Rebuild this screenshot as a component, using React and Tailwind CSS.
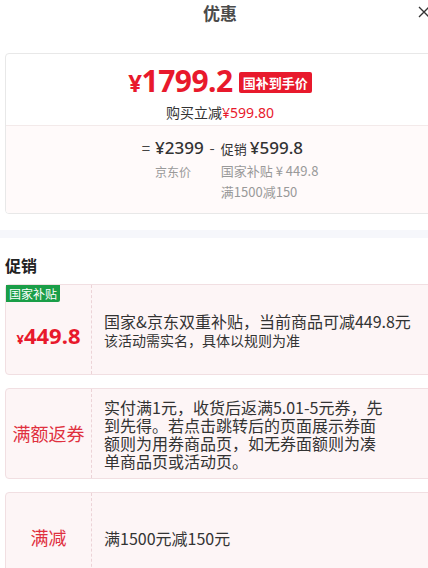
import React from 'react';

const cjk = '"Noto Sans CJK SC", "Noto Sans", sans-serif';
const num = '"Noto Sans", "Noto Sans CJK SC", sans-serif';

function PromoCard({ left, children }) {
    return (
        <div className="mx-[5px] flex h-[91px] rounded-[4px] border border-[#f1dfe2] bg-[#fdf5f6]">
            <div className="relative flex w-[86px] shrink-0 items-center justify-center border-r border-dashed border-[#ecd3d7]">
                {left}
            </div>
            <div className="flex flex-1 flex-col justify-center pl-[12px] text-[#333]">
                {children}
            </div>
        </div>
    );
}

export default function App() {
    return (
        <div className="w-[428px] h-[568px] overflow-hidden bg-white" style={{ fontFamily: cjk }}>
            <div className="w-[440px]">
                {/* header */}
                <div className="relative flex h-[24px] items-center justify-center">
                    <span className="text-[17px] font-bold text-[#4a4a4a] leading-none">优惠</span>
                    <svg className="absolute right-[10px] top-[6px]" width="12" height="12" viewBox="0 0 12 12">
                        <path d="M1 1L11 11M11 1L1 11" stroke="#333" strokeWidth="1.3" />
                    </svg>
                </div>

                {/* price card */}
                <div className="mx-[5px] mt-[29px] overflow-hidden rounded-[4px] border border-[#e8e8e8]">
                    <div className="flex h-[72px] flex-col items-center border-b border-[#f3eaea] pt-[12px]">
                        <div className="flex items-center">
                            <span className="font-bold text-[#e8192c] text-[30px] leading-[30px] tracking-[-0.5px]" style={{ fontFamily: num }}>
                                <span className="text-[24px]">¥</span>1799.2
                            </span>
                            <span className="ml-[6px] rounded-[2px] bg-[#e8192c] px-[4px] text-[13px] font-bold leading-[21px] text-white">国补到手价</span>
                        </div>
                        <div className="mt-[6px] text-[14px] leading-[16px] text-[#333]">
                            购买立减<span className="text-[#e8192c]" style={{ fontFamily: num }}>¥599.80</span>
                        </div>
                    </div>
                    <div className="flex h-[87px] justify-center bg-[#fffafa] pt-[12px] pl-[20px]">
                        <span className="text-[15px] leading-[20px] text-[#444] mr-[5px]">=</span>
                        <div className="flex flex-col">
                            <span className="text-[17px] leading-[20px] font-medium text-[#333]" style={{ fontFamily: num }}>¥2399</span>
                            <span className="mt-[7px] text-[12px] leading-[14px] text-[#999]">京东价</span>
                        </div>
                        <span className="mx-[6px] text-[15px] leading-[20px] text-[#444]">-</span>
                        <div className="flex flex-col">
                            <span className="text-[17px] leading-[20px] font-medium text-[#333]" style={{ fontFamily: num }}>
                                <span className="text-[13px] font-normal" style={{ fontFamily: cjk }}>促销 </span>¥599.8
                            </span>
                            <span className="mt-[4px] text-[13px] leading-[16px] text-[#999]">国家补贴 ¥ 449.8</span>
                            <span className="mt-[5px] text-[13px] leading-[16px] text-[#999]">满1500减150</span>
                        </div>
                    </div>
                </div>

                <div className="mt-[16px] h-[8px] bg-[#f6f7fb]" />

                <div className="px-[5px] pt-[17px] text-[16px] font-bold leading-[20px] text-[#222]">促销</div>

                <div className="mt-[9px] flex flex-col gap-[13px]">
                    <PromoCard
                        left={
                            <>
                                <span className="absolute left-0 top-0 rounded-br-[2px] bg-[#1a9e48] px-[3px] text-[12px] leading-[17px] text-white">国家补贴</span>
                                <span className="mt-[10px] font-bold text-[#e8192c] text-[22px] leading-none" style={{ fontFamily: num }}>
                                    <span className="text-[13px]">¥</span>449.8
                                </span>
                            </>
                        }
                    >
                        <div className="text-[16px] leading-[20px] whitespace-nowrap">国家&amp;京东双重补贴，当前商品可减449.8元</div>
                        <div className="text-[14px] leading-[18px]">该活动需实名，具体以规则为准</div>
                    </PromoCard>

                    <PromoCard left={<span className="text-[18px] text-[#e0303e]">满额返券</span>}>
                        <div className="text-[16px] leading-[18px]">
                            <div>实付满1元，收货后返满5.01-5元券，先</div>
                            <div>到先得。若点击跳转后的页面展示券面</div>
                            <div>额则为用券商品页，如无券面额则为凑</div>
                            <div>单商品页或活动页。</div>
                        </div>
                    </PromoCard>

                    <PromoCard left={<span className="text-[18px] text-[#e0303e]">满减</span>}>
                        <div className="text-[16px] leading-[20px]">满1500元减150元</div>
                    </PromoCard>
                </div>
            </div>
        </div>
    );
}
